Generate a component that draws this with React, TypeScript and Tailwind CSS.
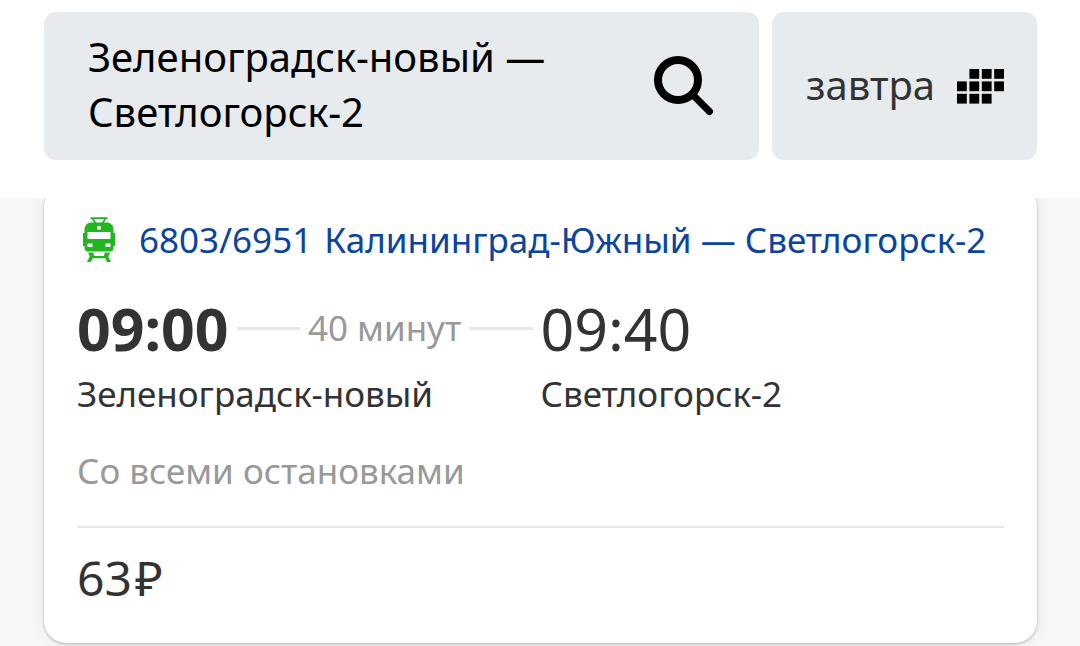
import React from "react";

function SearchIcon() {
  return (
    <svg viewBox="0 0 60 60" className="h-[60px] w-[60px] shrink-0" fill="none" stroke="currentColor" aria-hidden="true">
      <circle cx="24" cy="24" r="20" strokeWidth="8" />
      <path d="M38 38 55.500 55.500" strokeWidth="7" strokeLinecap="round" />
    </svg>
  );
}

function CalendarIcon() {
  const cells = [
    [1, 0], [2, 0], [3, 0],
    [0, 1], [1, 1], [2, 1], [3, 1],
    [0, 2], [1, 2], [2, 2],
  ];
  return (
    <svg viewBox="0 0 47 35" className="h-[35px] w-[47px] shrink-0 text-black" fill="currentColor" aria-hidden="true">
      {cells.map(([col, row]) => (
        <rect key={`${col}-${row}`} x={col * 12.4} y={row * 12.4} width="9.8" height="9.8" />
      ))}
    </svg>
  );
}

function TrainIcon() {
  return (
    <svg viewBox="0 0 32 46" className="h-[46px] w-8 shrink-0 text-[#1fb61f]" fill="currentColor" aria-hidden="true">
      <path d="M7.500 1.200H24.500M9.500 1.500 13 7M22.500 1.500 19 7" fill="none" stroke="currentColor" strokeWidth="1.800" />
      <path d="M8 5.500H24Q30 6 30.500 12V16H32V29H30.500V31Q30.500 34.500 27 34.500H5Q1.500 34.500 1.500 31V29H0V16H1.500V12Q2 6 8 5.500Z" />
      <path d="M5 35.500H10L11.300 39H20.700L22 35.500H27L25.300 39.500 28 45H24L22.300 41.300H9.700L8 45H4L6.700 39.500Z" />
      <circle cx="16" cy="10.800" r="2.100" fill="#fff" />
      <rect x="4.500" y="15" width="23" height="7" fill="#fff" />
      <rect x="4.500" y="26.500" width="5" height="3.500" fill="#fff" />
      <rect x="22.500" y="26.500" width="5" height="3.500" fill="#fff" />
    </svg>
  );
}

function Line() {
  return <span className="h-[3px] flex-1 bg-[#e6e6e6]" />;
}

export default function App() {
  return (
    <div className="min-h-screen bg-[#f7f7f7] font-['Noto_Sans',sans-serif] text-[#333]">
      <header className="flex gap-[13px] bg-white pt-3 pr-[43px] pb-[38px] pl-11">
        <button
          type="button"
          className="flex min-h-[148px] flex-1 items-center justify-between rounded-xl bg-[#e7ebee] pr-[45px] pl-11 text-left text-[40px] leading-[55px] text-black"
        >
          <span className="pb-1">
            Зеленоградск-новый —<br />
            Светлогорск-2
          </span>
          <SearchIcon />
        </button>
        <button
          type="button"
          className="flex min-h-[148px] w-[265px] items-center justify-between rounded-xl bg-[#e7ebee] pr-[33px] pl-[34px] text-[40px] leading-[55px]"
        >
          <span className="pb-1">завтра</span>
          <CalendarIcon />
        </button>
      </header>

      <main className="overflow-hidden pr-[43px] pb-[3px] pl-11">
        <article className="-mt-3 rounded-[22px] bg-white px-[33px] pt-[30px] pb-9 shadow-[0_1px_3px_rgba(0,0,30,0.25),0_0_16px_rgba(0,0,30,0.07)]">
          <a href="#train" className="flex items-center text-[35px] leading-[48px] whitespace-nowrap text-[#0b44a0]">
            <span className="mr-6 ml-1.5 flex">
              <TrainIcon />
            </span>
            <span className="mr-3">6803/6951</span>
            <span>Калининград-Южный — Светлогорск-2</span>
          </a>

          <div className="mt-7 grid grid-cols-2">
            <div className="flex items-center gap-2 pr-2">
              <time className="text-[59px] leading-[72px] font-bold">09:00</time>
              <Line />
              <span className="text-[35px] leading-[48px] text-[#999]">40 минут</span>
              <Line />
            </div>
            <time className="text-[59px] leading-[72px]">09:40</time>
            <p className="mt-1.5 text-[35px] leading-[48px]">Зеленоградск-новый</p>
            <p className="mt-1.5 text-[35px] leading-[48px]">Светлогорск-2</p>
          </div>

          <p className="mt-[29px] text-[35px] leading-[48px] text-[#999]">Со всеми остановками</p>
          <hr className="mt-[31px] border-t-2 border-[#e6e6e6]" />
          <p className="mt-[22px] flex gap-[3px] pb-px text-5xl leading-[56px]">
            <span>63</span>
            <span>₽</span>
          </p>
        </article>
      </main>
    </div>
  );
}
